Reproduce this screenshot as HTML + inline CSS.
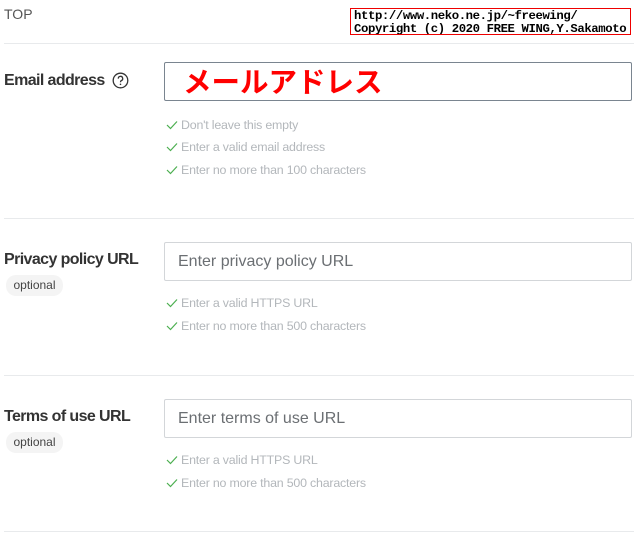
<!DOCTYPE html>
<html><head><meta charset="utf-8"><style>
body{margin:0;width:638px;height:536px;background:#fff;font-family:"Liberation Sans",Arial,sans-serif;position:relative;overflow:hidden}
.a{position:absolute}
.sep{position:absolute;left:4px;right:4px;height:1px;background:#e8eaec}
.lbl{position:absolute;left:4px;font-weight:bold;font-size:16px;color:#333;letter-spacing:-0.6px}
.inp{position:absolute;left:164px;font-size:16px;color:#6b6f73;line-height:37px;padding-left:13px;box-sizing:border-box;width:468px;height:39px;border:1px solid #d3d6d9;border-radius:2px}
.v{position:absolute;left:166px;font-size:12.4px;color:#b3b7bb;letter-spacing:-0.2px}
.v svg{vertical-align:-1px;margin-right:3px}
.opt{position:absolute;left:6px;width:57px;height:21px;border-radius:10px;background:#f4f4f4;font-size:12px;color:#444;text-align:center;line-height:21px}
</style></head><body>
<div class="a" style="left:4px;top:6px;font-size:14px;color:#555">TOP</div>
<div class="a" style="left:350px;top:8px;width:281px;height:27px;border:1px solid #e00;font-family:'Liberation Mono',monospace;font-size:12.3px;font-weight:bold;line-height:13px;padding:1px 0 0 3px;box-sizing:border-box;white-space:nowrap;letter-spacing:-0.4px;overflow:hidden">http://www.neko.ne.jp/~freewing/<br>Copyright (c) 2020 FREE WING,Y.Sakamoto</div>
<div class="sep" style="top:43px"></div>
<div class="lbl" style="top:72px">Email address</div>
<svg class="a" style="left:112px;top:72px" width="17" height="17" viewBox="0 0 17 17"><circle cx="8.5" cy="8.5" r="7.3" fill="none" stroke="#333" stroke-width="1.3"/><path d="M6.3 6.6a2.2 2.2 0 1 1 3 2c-.7.3-.8.8-.8 1.6" fill="none" stroke="#333" stroke-width="1.3"/><circle cx="8.5" cy="12.3" r=".8" fill="#333"/></svg>
<div class="inp" style="top:62px;border-color:#7a8590;color:#f00;font-family:'Noto Sans CJK JP',sans-serif;font-size:28.5px;line-height:36px;padding-left:18px;font-weight:bold;letter-spacing:0">メールアドレス</div>
<div class="v" style="top:118px"><svg width="12" height="10"><path d="M1 5l3.5 3.5L11 1.5" fill="none" stroke="#4caf50" stroke-width="1.2"/></svg>Don't leave this empty</div>
<div class="v" style="top:140px"><svg width="12" height="10"><path d="M1 5l3.5 3.5L11 1.5" fill="none" stroke="#4caf50" stroke-width="1.2"/></svg>Enter a valid email address</div>
<div class="v" style="top:163px"><svg width="12" height="10"><path d="M1 5l3.5 3.5L11 1.5" fill="none" stroke="#4caf50" stroke-width="1.2"/></svg>Enter no more than 100 characters</div>
<div class="sep" style="top:218px"></div>
<div class="lbl" style="top:251px">Privacy policy URL</div>
<div class="opt" style="top:275px">optional</div>
<div class="inp" style="top:242px">Enter privacy policy URL</div>
<div class="v" style="top:296px"><svg width="12" height="10"><path d="M1 5l3.5 3.5L11 1.5" fill="none" stroke="#4caf50" stroke-width="1.2"/></svg>Enter a valid HTTPS URL</div>
<div class="v" style="top:319px"><svg width="12" height="10"><path d="M1 5l3.5 3.5L11 1.5" fill="none" stroke="#4caf50" stroke-width="1.2"/></svg>Enter no more than 500 characters</div>
<div class="sep" style="top:375px"></div>
<div class="lbl" style="top:408px">Terms of use URL</div>
<div class="opt" style="top:432px">optional</div>
<div class="inp" style="top:399px">Enter terms of use URL</div>
<div class="v" style="top:453px"><svg width="12" height="10"><path d="M1 5l3.5 3.5L11 1.5" fill="none" stroke="#4caf50" stroke-width="1.2"/></svg>Enter a valid HTTPS URL</div>
<div class="v" style="top:476px"><svg width="12" height="10"><path d="M1 5l3.5 3.5L11 1.5" fill="none" stroke="#4caf50" stroke-width="1.2"/></svg>Enter no more than 500 characters</div>
<div class="sep" style="top:531px"></div>
</body></html>
